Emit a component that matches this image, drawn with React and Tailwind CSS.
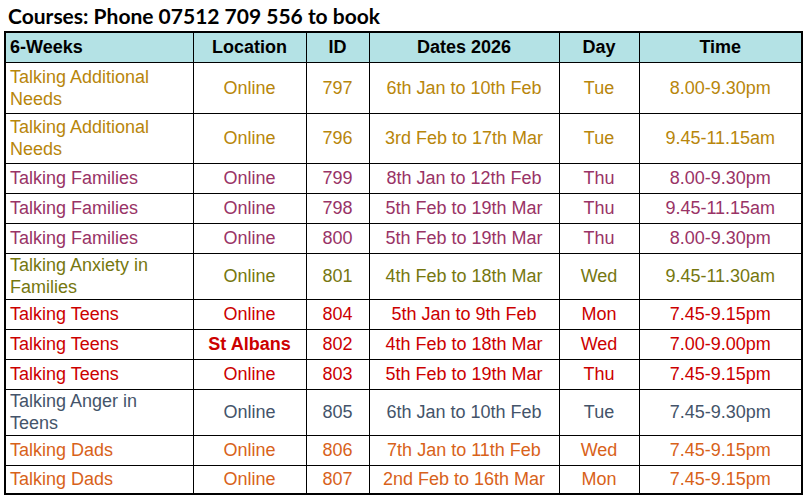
import React from 'react';

const GOLD = 'text-[#B8860B]';
const PURPLE = 'text-[#993366]';
const OLIVE = 'text-[#76770F]';
const RED = 'text-[#CC0000]';
const SLATE = 'text-[#44546A]';
const ORANGE = 'text-[#D8621A]';

const courses = [
    { name: 'Talking Additional Needs', loc: 'Online', id: 797, dates: '6th Jan to 10th Feb', day: 'Tue', time: '8.00-9.30pm', color: GOLD, h: 'h-[51px]' },
    { name: 'Talking Additional Needs', loc: 'Online', id: 796, dates: '3rd Feb to 17th Mar', day: 'Tue', time: '9.45-11.15am', color: GOLD, h: 'h-[50px]' },
    { name: 'Talking Families', loc: 'Online', id: 799, dates: '8th Jan to 12th Feb', day: 'Thu', time: '8.00-9.30pm', color: PURPLE, h: 'h-[30px]' },
    { name: 'Talking Families', loc: 'Online', id: 798, dates: '5th Feb to 19th Mar', day: 'Thu', time: '9.45-11.15am', color: PURPLE, h: 'h-[30px]' },
    { name: 'Talking Families', loc: 'Online', id: 800, dates: '5th Feb to 19th Mar', day: 'Thu', time: '8.00-9.30pm', color: PURPLE, h: 'h-[30px]' },
    { name: 'Talking Anxiety in Families', loc: 'Online', id: 801, dates: '4th Feb to 18th Mar', day: 'Wed', time: '9.45-11.30am', color: OLIVE, h: 'h-[46px]' },
    { name: 'Talking Teens', loc: 'Online', id: 804, dates: '5th Jan to 9th Feb', day: 'Mon', time: '7.45-9.15pm', color: RED, h: 'h-[30px]' },
    { name: 'Talking Teens', loc: 'St Albans', id: 802, dates: '4th Feb to 18th Mar', day: 'Wed', time: '7.00-9.00pm', color: RED, h: 'h-[30px]', bold: true },
    { name: 'Talking Teens', loc: 'Online', id: 803, dates: '5th Feb to 19th Mar', day: 'Thu', time: '7.45-9.15pm', color: RED, h: 'h-[30px]' },
    { name: 'Talking Anger in Teens', loc: 'Online', id: 805, dates: '6th Jan to 10th Feb', day: 'Tue', time: '7.45-9.30pm', color: SLATE, h: 'h-[46px]' },
    { name: 'Talking Dads', loc: 'Online', id: 806, dates: '7th Jan to 11th Feb', day: 'Wed', time: '7.45-9.15pm', color: ORANGE, h: 'h-[30px]' },
    { name: 'Talking Dads', loc: 'Online', id: 807, dates: '2nd Feb to 16th Mar', day: 'Mon', time: '7.45-9.15pm', color: ORANGE, h: 'h-[29px]' },
];

export default function App() {
    return (
        <div className="w-[807px] h-[497px] bg-white overflow-hidden">
            <div className="h-[31px] pl-[8px] pt-[4px] font-['Lato',sans-serif] font-bold text-[21px] leading-[24px] text-black">
                Courses: Phone 07512 709 556 to book
            </div>
            <table className="ml-[4px] w-[797px] border-collapse border-2 border-black table-fixed font-['Liberation_Sans',Arial,sans-serif] text-[18px] leading-[22px]">
                <colgroup>
                    <col className="w-[188px]" />
                    <col className="w-[113px]" />
                    <col className="w-[63px]" />
                    <col className="w-[190px]" />
                    <col className="w-[80px]" />
                    <col className="w-[163px]" />
                </colgroup>
                <thead>
                    <tr className="h-[30px] bg-[#B4E2E5] font-bold text-black">
                        <th className="border border-black px-[4px] text-left">6-Weeks</th>
                        <th className="border border-black">Location</th>
                        <th className="border border-black">ID</th>
                        <th className="border border-black">Dates 2026</th>
                        <th className="border border-black">Day</th>
                        <th className="border border-black">Time</th>
                    </tr>
                </thead>
                <tbody>
                    {courses.map((c, i) => (
                        <tr key={i} className={`${c.h} ${c.color}`}>
                            <td className="border border-black px-[4px] text-left align-middle">{c.name}</td>
                            <td className={`border border-black text-center ${c.bold ? 'font-bold' : ''}`}>{c.loc}</td>
                            <td className="border border-black text-center">{c.id}</td>
                            <td className="border border-black text-center">{c.dates}</td>
                            <td className="border border-black text-center">{c.day}</td>
                            <td className="border border-black text-center">{c.time}</td>
                        </tr>
                    ))}
                </tbody>
            </table>
        </div>
    );
}
